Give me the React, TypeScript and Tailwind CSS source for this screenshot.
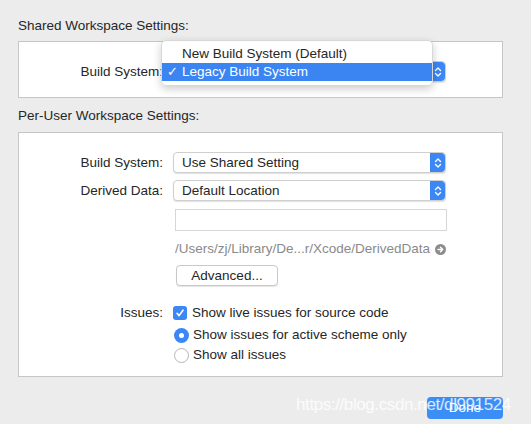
import React from "react";

const font = { fontFamily: '"Liberation Sans", Arial, sans-serif' };

function Stepper() {
  return (
    <div className="w-[15px] self-stretch bg-[#3b87f4] rounded-r-[4px] flex items-center justify-center">
      <svg width="8" height="12" viewBox="0 0 8 12" fill="none" stroke="white" strokeWidth="1.4" strokeLinecap="round" strokeLinejoin="round">
        <path d="M1.5 4.5 L4 2 L6.5 4.5" />
        <path d="M1.5 7.5 L4 10 L6.5 7.5" />
      </svg>
    </div>
  );
}

function PopupButton({ value }: { value: string }) {
  return (
    <div className="w-[273px] h-[21px] flex items-stretch bg-white rounded-[4px] border border-[#cfcfcf] shadow-[0_1px_1px_rgba(0,0,0,0.12)]">
      <div className="flex-1 flex items-center pl-[8px] text-[13.5px] leading-[16px] text-[#262626]">{value}</div>
      <Stepper />
    </div>
  );
}

function Row({ label, children }: { label: string; children: React.ReactNode }) {
  return (
    <div className="flex items-center">
      <div className="w-[154px] pr-[10px] text-right text-[13.5px] leading-[16px] text-[#262626]">{label}</div>
      {children}
    </div>
  );
}

export default function App() {
  return (
    <div className="relative w-[531px] h-[424px] bg-[#ececec] overflow-hidden px-[18px] pt-[18px] text-[13.5px] leading-[16px]" style={font}>
      <div className="text-[#262626]">Shared Workspace Settings:</div>
      <div className="mt-[7px] h-[57px] w-[485px] bg-white border border-[#c6c6c6] flex items-center pt-[4px]">
        <Row label="Build System:">
          <PopupButton value="Legacy Build System" />
        </Row>
      </div>

      <div className="mt-[10px] text-[#262626]">Per-User Workspace Settings:</div>
      <div className="mt-[8px] h-[245px] w-[485px] bg-white border border-[#c6c6c6] pt-[19px] flex flex-col">
        <Row label="Build System:">
          <PopupButton value="Use Shared Setting" />
        </Row>
        <div className="mt-[7px]">
          <Row label="Derived Data:">
            <PopupButton value="Default Location" />
          </Row>
        </div>
        <div className="mt-[8px] ml-[156px] w-[272px] h-[22px] border border-[#d6d6d6] bg-white" />
        <div className="mt-[10px] ml-[156px] w-[272px] flex items-center justify-between text-[#8a8a8a]">
          <span>/Users/zj/Library/De...r/Xcode/DerivedData</span>
          <svg width="11" height="11" viewBox="0 0 11 11" className="mr-[1px]">
            <circle cx="5.5" cy="5.5" r="5.5" fill="#8c8c8c" />
            <path d="M3 5.5 H7.5 M5.5 3.3 L7.7 5.5 L5.5 7.7" stroke="white" strokeWidth="1.5" fill="none" strokeLinecap="round" strokeLinejoin="round" />
          </svg>
        </div>
        <div className="mt-[8px] ml-[157px] w-[102px] h-[21px] rounded-[4px] bg-white border border-[#c8c8c8] shadow-[0_1px_1px_rgba(0,0,0,0.1)] flex items-center justify-center text-[#262626]">
          Advanced...
        </div>
        <div className="mt-[19px]">
          <Row label="Issues:">
            <div className="flex items-center gap-[5px]">
              <div className="w-[14px] h-[14px] rounded-[3px] bg-[#3b87f4] flex items-center justify-center">
                <svg width="10" height="10" viewBox="0 0 10 10" fill="none" stroke="white" strokeWidth="1.6" strokeLinecap="round" strokeLinejoin="round">
                  <path d="M2 5.3 L4.1 7.6 L8 2.2" />
                </svg>
              </div>
              <span className="text-[#262626]">Show live issues for source code</span>
            </div>
          </Row>
        </div>
        <div className="mt-[6px] ml-[155px] flex items-center gap-[4px]">
          <div className="w-[15px] h-[15px] rounded-full bg-[#3b87f4] flex items-center justify-center">
            <div className="w-[5px] h-[5px] rounded-full bg-white" />
          </div>
          <span className="text-[#262626]">Show issues for active scheme only</span>
        </div>
        <div className="mt-[4px] ml-[155px] flex items-center gap-[4px]">
          <div className="w-[15px] h-[15px] rounded-full bg-white border border-[#b5b5b5]" />
          <span className="text-[#262626]">Show all issues</span>
        </div>
      </div>

      <div className="mt-[20px] w-[485px] flex justify-end">
        <div className="w-[76px] h-[22px] rounded-[4px] bg-[#3b8ef5] flex items-center justify-center text-white">Done</div>
      </div>

      {/* popup menu open over the shared build system setting */}
      <div className="absolute left-[161px] top-[40px] w-[272px] h-[46px] bg-white/95 rounded-[5px] border border-[#d8d8d8] shadow-[0_3px_8px_rgba(0,0,0,0.2)] pt-[4px]">
        <div className="h-[18px] flex items-center pl-[20px] text-[#262626]">New Build System (Default)</div>
        <div className="h-[18px] flex items-center bg-[#3a85f2] text-white">
          <span className="w-[20px] pl-[5px] text-[13px]">✓</span>
          <span>Legacy Build System</span>
        </div>
      </div>

      <div className="absolute left-[296px] top-[395px] text-[17px] leading-[20px] text-white/80 tracking-[-0.4px]">https://blog.csdn.net/dl991524</div>
    </div>
  );
}
